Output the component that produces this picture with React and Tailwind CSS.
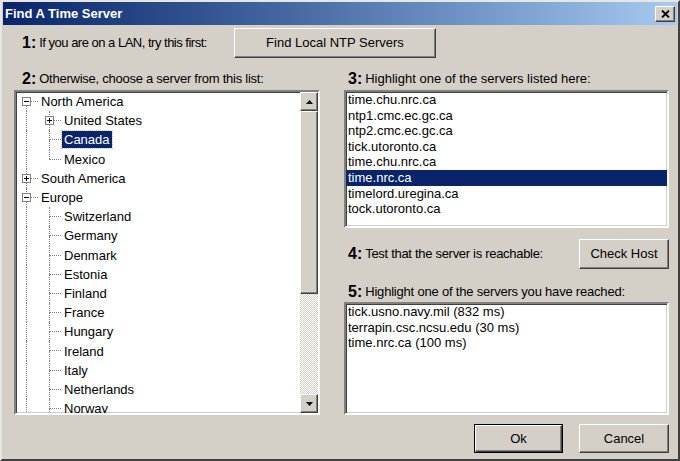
import React from "react";

const FONT = "font-['Liberation_Sans',Arial,sans-serif]";
const RAISED =
  "border border-t-white border-l-white border-r-[#404040] border-b-[#404040] shadow-[inset_-1px_-1px_0_#808080]";
const SUNKEN =
  "border-2 border-t-[#808080] border-l-[#808080] border-r-white border-b-white shadow-[inset_1px_1px_0_#404040,inset_-1px_-1px_0_#d4d0c8]";

const servers = [
  "time.chu.nrc.ca",
  "ntp1.cmc.ec.gc.ca",
  "ntp2.cmc.ec.gc.ca",
  "tick.utoronto.ca",
  "time.chu.nrc.ca",
  "time.nrc.ca",
  "timelord.uregina.ca",
  "tock.utoronto.ca",
];

const reached = [
  "tick.usno.navy.mil (832 ms)",
  "terrapin.csc.ncsu.edu (30 ms)",
  "time.nrc.ca (100 ms)",
];

const europe = [
  "Switzerland",
  "Germany",
  "Denmark",
  "Estonia",
  "Finland",
  "France",
  "Hungary",
  "Ireland",
  "Italy",
  "Netherlands",
  "Norway",
  "Poland",
];

// level, box (minus/plus/null), first, last
const tree = [
  { label: "North America", level: 0, box: "minus", first: true },
  { label: "United States", level: 1, box: "plus" },
  { label: "Canada", level: 1, selected: true },
  { label: "Mexico", level: 1, last: true },
  { label: "South America", level: 0, box: "plus" },
  { label: "Europe", level: 0, box: "minus" },
  ...europe.map((c) => ({ label: c, level: 1 })),
];

function Label({ n, children, tight }) {
  return (
    <div className={`flex items-center h-[18px] text-[13px] text-black whitespace-nowrap ${tight}`}>
      <span className="font-bold text-[16px] tracking-normal mr-[3px]">{n}:</span>
      <span>{children}</span>
    </div>
  );
}

function Button({ children, className = "", isDefault }) {
  if (isDefault) {
    return (
      <div className={`border border-black flex ${className}`}>
        <div className={`${RAISED} flex-1 flex items-center justify-center text-[13px] text-black`}>
          {children}
        </div>
      </div>
    );
  }
  return (
    <div className={`${RAISED} flex items-center justify-center text-[13px] text-black ${className}`}>
      {children}
    </div>
  );
}

function ExpandBox({ type }) {
  return (
    <span className="absolute left-[6px] top-[5px] w-[9px] h-[9px] border border-[#808080] bg-white z-10">
      <span className="absolute left-[1px] top-[3px] w-[5px] h-px bg-black" />
      {type === "plus" && <span className="absolute left-[3px] top-[1px] w-px h-[5px] bg-black" />}
    </span>
  );
}

function TreeRow({ node }) {
  const cells = [];
  for (let i = 0; i < node.level; i++) {
    cells.push(
      <span key={i} className="relative w-[23px] h-full shrink-0">
        <span className="absolute left-[10px] top-0 bottom-0 border-l border-dotted border-[#808080]" />
      </span>
    );
  }
  return (
    <div className="flex items-center h-[19.2px] shrink-0">
      {cells}
      <span className="relative w-[23px] h-full shrink-0">
        {!node.first && (
          <span className="absolute left-[10px] top-0 h-1/2 border-l border-dotted border-[#808080]" />
        )}
        {!node.last && (
          <span className="absolute left-[10px] top-1/2 bottom-0 border-l border-dotted border-[#808080]" />
        )}
        <span className="absolute left-[10px] top-[9px] w-[12px] border-t border-dotted border-[#808080]" />
        {node.box && <ExpandBox type={node.box} />}
      </span>
      <span
        className={`px-[2px] leading-[17px] text-[13px] whitespace-nowrap ${
          node.selected
            ? "bg-[#0a246a] text-white outline outline-1 outline-dotted outline-[#c0c0c0]"
            : "text-black"
        }`}
      >
        {node.label}
      </span>
    </div>
  );
}

function Arrow({ up }) {
  return (
    <svg width="7" height="4" viewBox="0 0 7 4">
      {up ? <path d="M3.5 0 L7 4 L0 4 Z" fill="#000" /> : <path d="M0 0 L7 0 L3.5 4 Z" fill="#000" />}
    </svg>
  );
}

function Scrollbar() {
  return (
    <div className="w-[18px] h-full flex flex-col shrink-0">
      <div className={`${RAISED} h-[19px] shrink-0 bg-[#d4d0c8] flex items-center justify-center`}>
        <Arrow up />
      </div>
      <div className={`${RAISED} h-[183px] shrink-0 bg-[#d4d0c8]`} />
      <div className="flex-1 bg-[repeating-conic-gradient(#d4d0c8_0_25%,#ffffff_0_50%)] bg-[length:2px_2px]" />
      <div className={`${RAISED} h-[19px] shrink-0 bg-[#d4d0c8] flex items-center justify-center`}>
        <Arrow />
      </div>
    </div>
  );
}

function ListBox({ items, selected, className }) {
  return (
    <div className={`${SUNKEN} bg-white ${className}`}>
      <div className="flex flex-col">
        {items.map((s, i) => (
          <div
            key={i}
            className={`h-[15.6px] shrink-0 leading-[15.6px] px-[2px] text-[13px] whitespace-nowrap ${
              i === selected ? "bg-[#0a246a] text-white" : "text-black"
            }`}
          >
            {s}
          </div>
        ))}
      </div>
    </div>
  );
}

export default function App() {
  return (
    <div
      className={`${FONT} w-[680px] h-[461px] bg-[#d4d0c8] border-2 border-t-[#e8e6e0] border-l-[#e8e6e0] border-r-[#404040] border-b-[#404040] px-[1px] flex flex-col overflow-hidden`}
    >
      {/* title bar */}
      <div className="h-[23px] shrink-0 flex items-center justify-between bg-gradient-to-r from-[#0a246a] to-[#a6caf0] pl-[2px] pr-[2px]">
        <span className="text-white font-bold text-[13px]">Find A Time Server</span>
        <div className={`${RAISED} bg-[#d4d0c8] w-[20px] h-[16px] flex items-center justify-center`}>
          <svg width="9" height="8" viewBox="0 0 9 8">
            <path d="M1 0.5 L8 7.5 M8 0.5 L1 7.5" stroke="#000" strokeWidth="1.8" />
          </svg>
        </div>
      </div>

      <div className="flex-1 flex flex-col pl-[11px] pr-[8px]">
        {/* step 1 */}
        <div className="flex items-center mt-[3px] h-[30px]">
          <div className="w-[220px] pl-[8px]">
            <Label n="1" tight="tracking-[-0.5px]">
              If you are on a LAN, try this first:
            </Label>
          </div>
          <Button className="w-[202px] h-[30px]">Find Local NTP Servers</Button>
        </div>

        <div className="flex mt-[12px] gap-[24px]">
          {/* left column */}
          <div className="w-[306px] flex flex-col">
            <div className="pl-[8px] mb-[2px]">
              <Label n="2" tight="tracking-[-0.25px]">
                Otherwise, choose a server from this list:
              </Label>
            </div>
            <div className={`${SUNKEN} bg-white h-[325px] flex`}>
              <div className="flex-1 overflow-hidden flex flex-col">
                {tree.map((node, i) => (
                  <TreeRow key={i} node={node} />
                ))}
              </div>
              <Scrollbar />
            </div>
          </div>

          {/* right column */}
          <div className="flex-1 flex flex-col">
            <div className="pl-[4px] mb-[2px]">
              <Label n="3">Highlight one of the servers listed here:</Label>
            </div>
            <ListBox items={servers} selected={5} className="h-[138px]" />

            <div className="flex items-center justify-between mt-[11px] h-[30px]">
              <div className="pl-[4px]">
                <Label n="4" tight="tracking-[-0.3px]">
                  Test that the server is reachable:
                </Label>
              </div>
              <Button className="w-[90px] h-[30px]">Check Host</Button>
            </div>

            <div className="pl-[4px] mt-[14px] mb-[1px]">
              <Label n="5" tight="tracking-[-0.2px]">
                Highlight one of the servers you have reached:
              </Label>
            </div>
            <ListBox items={reached} className="h-[113px]" />
          </div>
        </div>

        {/* bottom buttons */}
        <div className="flex justify-end gap-[16px] mt-[9px]">
          <Button isDefault className="w-[89px] h-[29px]">
            Ok
          </Button>
          <Button className="w-[90px] h-[29px]">Cancel</Button>
        </div>
      </div>
    </div>
  );
}
